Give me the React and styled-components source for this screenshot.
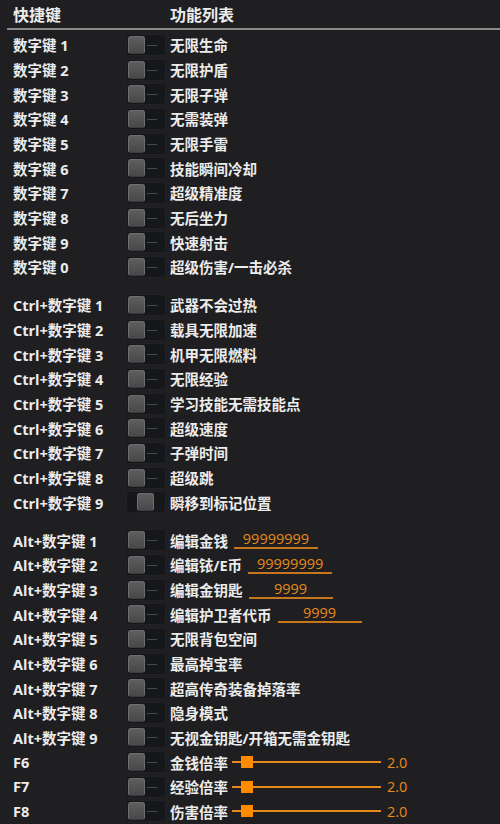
import React from "react";
import styled, { createGlobalStyle } from "styled-components";

const GlobalStyle = createGlobalStyle`
  html, body {
    margin: 0;
    padding: 0;
    background: #1f1f21;
  }
  body {
    font-family: "Open Sans", "Noto Sans CJK SC", sans-serif;
    color: #e8e8e8;
    overflow: hidden;
  }
`;

const Panel = styled.div`
  width: 500px;
  height: 824px;
  padding-left: 7px;
  box-sizing: border-box;
  background: #1f1f21;
`;

const Header = styled.div`
  display: flex;
  align-items: center;
  height: 28px;
  padding-left: 6px;
  border-bottom: 2px solid #8a8a8a;
  font-size: 16px;
  font-weight: 700;
  color: #ececec;
`;

const HeadKey = styled.div`
  width: 157px;
`;

const Group = styled.div`
  margin-top: ${p => (p.$first ? "2.67px" : "13.4px")};
`;

const Row = styled.div`
  display: flex;
  align-items: center;
  height: 24.67px;
  font-size: 14.5px;
  font-weight: 700;
  white-space: nowrap;
`;

const Key = styled.div`
  width: 113px;
  padding-left: 6px;
  color: #ececec;
`;

const Track = styled.div`
  position: relative;
  flex: none;
  width: 40px;
  height: 22px;
  margin-right: 4px;
  border-radius: 4px;
  background: #15171b;
  box-shadow: inset 0 0 0 1px #202227;
`;

const Knob = styled.span`
  position: absolute;
  top: 2px;
  left: ${p => p.$left}px;
  width: 17px;
  height: 18px;
  box-sizing: border-box;
  border-radius: 3px;
  border: 1px solid #6e6e6e;
  border-bottom-color: #3e3e3e;
  background: linear-gradient(#5e5e5e, #484848);
`;

const Mark = styled.span`
  position: absolute;
  top: 11px;
  left: 21px;
  width: 10px;
  height: 1px;
  background: #46484c;
`;

const Label = styled.div`
  color: #ececec;
`;

const Field = styled.div`
  width: 84px;
  margin-left: 6px;
  border-bottom: 2px solid #c8761c;
  color: #e8891c;
  font-weight: 400;
  font-size: 14.5px;
  line-height: 16px;
  text-align: center;
`;

const Slider = styled.div`
  position: relative;
  width: 149px;
  height: 12px;
  margin-left: 4px;
`;

const SliderLine = styled.span`
  position: absolute;
  left: 0;
  right: 0;
  top: 5px;
  height: 2px;
  background: #e8891c;
`;

const SliderHandle = styled.span`
  position: absolute;
  top: 0;
  left: ${p => p.$left}px;
  width: 12px;
  height: 12px;
  background: #ff8c00;
`;

const SliderValue = styled.div`
  margin-left: 6px;
  color: #e8891c;
  font-weight: 400;
  font-size: 14.5px;
`;

const Toggle = ({ mid }) => (
  <Track>
    <Knob $left={mid ? 11 : 2} />
    {!mid && <Mark />}
  </Track>
);

const groups = [
  [
    ["数字键 1", "无限生命"],
    ["数字键 2", "无限护盾"],
    ["数字键 3", "无限子弹"],
    ["数字键 4", "无需装弹"],
    ["数字键 5", "无限手雷"],
    ["数字键 6", "技能瞬间冷却"],
    ["数字键 7", "超级精准度"],
    ["数字键 8", "无后坐力"],
    ["数字键 9", "快速射击"],
    ["数字键 0", "超级伤害/一击必杀"],
  ],
  [
    ["Ctrl+数字键 1", "武器不会过热"],
    ["Ctrl+数字键 2", "载具无限加速"],
    ["Ctrl+数字键 3", "机甲无限燃料"],
    ["Ctrl+数字键 4", "无限经验"],
    ["Ctrl+数字键 5", "学习技能无需技能点"],
    ["Ctrl+数字键 6", "超级速度"],
    ["Ctrl+数字键 7", "子弹时间"],
    ["Ctrl+数字键 8", "超级跳"],
    ["Ctrl+数字键 9", "瞬移到标记位置", { mid: true }],
  ],
  [
    ["Alt+数字键 1", "编辑金钱", { field: "99999999" }],
    ["Alt+数字键 2", "编辑铱/E币", { field: "99999999" }],
    ["Alt+数字键 3", "编辑金钥匙", { field: "9999" }],
    ["Alt+数字键 4", "编辑护卫者代币", { field: "9999" }],
    ["Alt+数字键 5", "无限背包空间"],
    ["Alt+数字键 6", "最高掉宝率"],
    ["Alt+数字键 7", "超高传奇装备掉落率"],
    ["Alt+数字键 8", "隐身模式"],
    ["Alt+数字键 9", "无视金钥匙/开箱无需金钥匙"],
    ["F6", "金钱倍率", { slider: "2.0" }],
    ["F7", "经验倍率", { slider: "2.0" }],
    ["F8", "伤害倍率", { slider: "2.0" }],
  ],
];

const App = () => (
  <>
    <GlobalStyle />
    <Panel>
      <Header>
        <HeadKey>快捷键</HeadKey>
        <div>功能列表</div>
      </Header>
      {groups.map((rows, gi) => (
        <Group key={gi} $first={gi === 0}>
          {rows.map(([key, label, opts = {}]) => (
            <Row key={key}>
              <Key>{key}</Key>
              <Toggle mid={opts.mid} />
              <Label>{label}</Label>
              {opts.field && <Field>{opts.field}</Field>}
              {opts.slider && (
                <>
                  <Slider>
                    <SliderLine />
                    <SliderHandle $left={9} />
                  </Slider>
                  <SliderValue>{opts.slider}</SliderValue>
                </>
              )}
            </Row>
          ))}
        </Group>
      ))}
    </Panel>
  </>
);

export default App;
